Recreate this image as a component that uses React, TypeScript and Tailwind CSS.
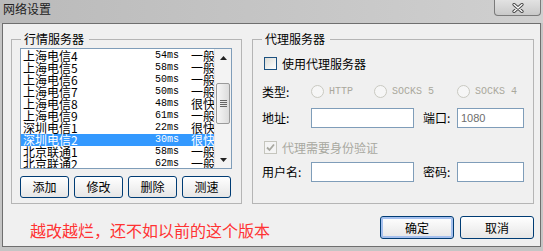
import React from "react";

const cjk = "font-['Noto_Sans_CJK_SC','Noto_Sans',sans-serif]";
const mono = "font-['Liberation_Mono','DejaVu_Sans_Mono',monospace]";

const servers = [
  { name: "上海电信4", ms: "54ms", speed: "一般" },
  { name: "上海电信5", ms: "58ms", speed: "一般" },
  { name: "上海电信6", ms: "50ms", speed: "一般" },
  { name: "上海电信7", ms: "50ms", speed: "一般" },
  { name: "上海电信8", ms: "48ms", speed: "很快" },
  { name: "上海电信9", ms: "61ms", speed: "一般" },
  { name: "深圳电信1", ms: "22ms", speed: "很快" },
  { name: "深圳电信2", ms: "30ms", speed: "很快", selected: true },
  { name: "北京联通1", ms: "58ms", speed: "一般" },
  { name: "北京联通2", ms: "62ms", speed: "一般" },
];

function Button({ label, w, main }: { label: string; w: string; main?: boolean }) {
  return (
    <button
      className={`${w} h-[22px] rounded-[3px] border border-[#003c74] bg-linear-to-b from-white to-[#e6e6e6] text-[12px] leading-none text-black ${
        main ? "shadow-[inset_0_0_0_2px_#a5c0ee]" : ""
      }`}
    >
      {label}
    </button>
  );
}

function Radio({ label, w }: { label: string; w: string }) {
  return (
    <div className={`${w} flex items-center gap-[5px]`}>
      <span className="w-[13px] h-[13px] rounded-full border border-[#c9c9c1] bg-[#f6f6f6]" />
      <span className={`${mono} text-[10px] text-[#aaa89c]`}>{label}</span>
    </div>
  );
}

function Input({ w, value }: { w: string; value?: string }) {
  return (
    <div
      className={`${w} h-[20px] border border-[#7f9db9] bg-white pl-[3px] flex items-center font-['Liberation_Sans',sans-serif] text-[11px] text-[#6d6d6d]`}
    >
      {value}
    </div>
  );
}

function Scrollbar() {
  return (
    <div className="w-[17px] flex flex-col bg-[#f3f3f3] border-l border-[#e4e4e4]">
      <div className="h-[17px] flex items-center justify-center">
        <svg width="7" height="4" viewBox="0 0 7 4">
          <path d="M3.5 0 L7 4 L0 4 Z" fill="#222" />
        </svg>
      </div>
      <div className="h-[17px]" />
      <div className="mx-[1px] h-[41px] rounded-[2px] border border-[#9a9a9a] bg-linear-to-r from-[#f6f6f6] to-[#dcdcdc] flex flex-col items-center justify-center gap-[1px]">
        <span className="w-[7px] h-[1px] bg-[#666]" />
        <span className="w-[7px] h-[1px] bg-[#666]" />
        <span className="w-[7px] h-[1px] bg-[#666]" />
        <span className="w-[7px] h-[1px] bg-[#666]" />
      </div>
      <div className="flex-1" />
      <div className="h-[17px] flex items-center justify-center">
        <svg width="7" height="4" viewBox="0 0 7 4">
          <path d="M0 0 L7 0 L3.5 4 Z" fill="#222" />
        </svg>
      </div>
    </div>
  );
}

export default function App() {
  return (
    <div className={`w-[543px] h-[251px] bg-[#c5c5c5] flex flex-col ${cjk} text-[12px] text-black select-none`}>
      <div className="h-[23px] flex justify-between bg-linear-to-r from-[#bababa] to-[#d0d0d0]">
        <div className="pl-[3px] pt-[1px] text-[12px] leading-[16px] text-[#222]">网络设置</div>
        <div className="mr-[2px] w-[47px] h-[16px] rounded-b-[4px] border border-t-0 border-[#7a7a7a] bg-linear-to-b from-[#e2e2e2] to-[#c9c9c9] flex items-center justify-center">
          <svg width="12" height="10" viewBox="0 0 12 10">
            <path d="M2 1.5 L10 8.5 M10 1.5 L2 8.5" stroke="#444" strokeWidth="3.2" strokeLinecap="round" />
            <path d="M2 1.5 L10 8.5 M10 1.5 L2 8.5" stroke="#fff" strokeWidth="1.4" strokeLinecap="round" />
          </svg>
        </div>
      </div>

      <div className="ml-[2px] w-[539px] h-[224px] border border-[#6f6f6f] bg-[#f0f0f0] flex flex-col">
        <div className="flex pl-[8px] pt-[8px] gap-[10px]">
          <fieldset className="w-[231px] h-[172px] border border-[#b5b5b5]">
            <legend className="ml-[9px] pl-[3px] pr-[5px] leading-[14px]">行情服务器</legend>
            <div className="ml-[8px] mt-[2px] w-[212px] h-[121px] border border-[#7f9db9] bg-white flex">
              <div className="flex-1 overflow-hidden pt-[1px]">
                {servers.map((s) => (
                  <div
                    key={s.name}
                    className={`h-[12px] pl-[2px] flex items-center whitespace-nowrap leading-[12px] ${
                      s.selected ? "bg-[#3399ff] text-white" : ""
                    }`}
                  >
                    <span className="w-[132px] shrink-0">{s.name}</span>
                    <span className={`w-[36px] shrink-0 ${mono} text-[10px]`}>{s.ms}</span>
                    <span className="shrink-0">{s.speed}</span>
                  </div>
                ))}
              </div>
              <Scrollbar />
            </div>
            <div className="ml-[8px] mt-[7px] flex gap-[5px]">
              <Button label="添加" w="w-[49px]" />
              <Button label="修改" w="w-[49px]" />
              <Button label="删除" w="w-[49px]" />
              <Button label="测速" w="w-[49px]" />
            </div>
          </fieldset>

          <fieldset className="w-[282px] h-[172px] border border-[#b5b5b5]">
            <legend className="ml-[9px] pl-[3px] pr-[5px] leading-[14px]">代理服务器</legend>
            <div className="mt-[11px] ml-[11px] h-[13px] flex items-center gap-[5px]">
              <span className="w-[13px] h-[13px] border border-[#1c5180] bg-linear-to-br from-[#dcdcd6] to-white" />
              <span>使用代理服务器</span>
            </div>
            <div className="mt-[15px] ml-[9px] h-[13px] flex items-center">
              <span className="w-[49px]">类型:</span>
              <Radio label="HTTP" w="w-[63px]" />
              <Radio label="SOCKS 5" w="w-[83px]" />
              <Radio label="SOCKS 4" w="w-[70px]" />
            </div>
            <div className="mt-[10px] ml-[9px] h-[20px] flex items-center">
              <span className="w-[49px]">地址:</span>
              <Input w="w-[103px]" />
              <span className="ml-[9px] w-[34px]">端口:</span>
              <Input w="w-[67px]" value="1080" />
            </div>
            <div className="mt-[13px] ml-[11px] h-[13px] flex items-center gap-[5px]">
              <span className="w-[13px] h-[13px] border border-[#c5c5bd] bg-[#f4f4f4] flex items-center justify-center">
                <svg width="9" height="9" viewBox="0 0 9 9">
                  <path d="M1 4.5 L3.5 7 L8 1.5" stroke="#a8a8a0" strokeWidth="1.8" fill="none" />
                </svg>
              </span>
              <span className="text-[#a8a8a0]">代理需要身份验证</span>
            </div>
            <div className="mt-[8px] ml-[9px] h-[20px] flex items-center">
              <span className="w-[49px]">用户名:</span>
              <Input w="w-[103px]" />
              <span className="ml-[9px] w-[34px]">密码:</span>
              <Input w="w-[67px]" />
            </div>
          </fieldset>
        </div>

        <div className="mt-[12px] flex justify-between pl-[27px] pr-[6px]">
          <div className="mt-[6px] text-[16px] leading-[16px] text-[#ff3333]">越改越烂，还不如以前的这个版本</div>
          <div className="flex gap-[6px]">
            <Button label="确定" w="w-[74px] h-[23px]" main />
            <Button label="取消" w="w-[74px] h-[23px]" />
          </div>
        </div>
      </div>
    </div>
  );
}
